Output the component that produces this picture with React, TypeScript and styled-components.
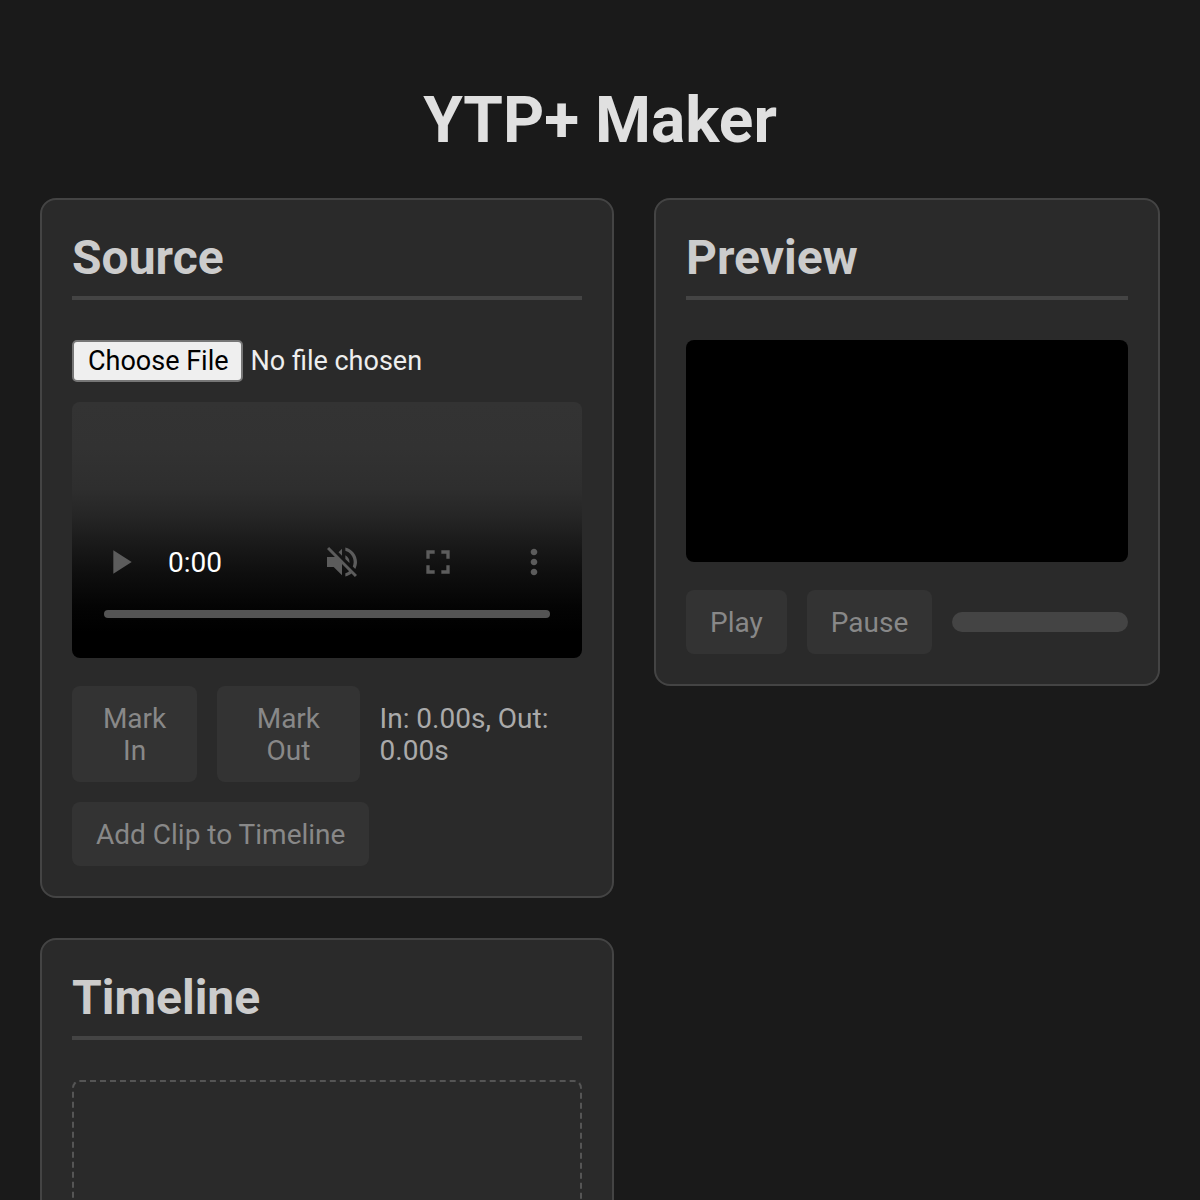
import React from "react";
import styled, { createGlobalStyle } from "styled-components";

const GlobalStyle = createGlobalStyle`
  *, *::before, *::after { box-sizing: border-box; }
  body {
    margin: 0;
    background: #1a1a1a;
    color: #eee;
    font-family: Roboto, "Liberation Sans", sans-serif;
  }
`;

const Page = styled.main`
  padding: 40px;
`;

const Title = styled.h1`
  margin: 43px 0 40px;
  font-size: 64px;
  line-height: 75px;
  font-weight: 700;
  text-align: center;
  color: #e0e0e0;
`;

const Editor = styled.div`
  display: grid;
  grid-template-columns: 287fr 253fr;
  gap: 40px;
  align-items: start;
`;

const Panel = styled.section<{ $column: number }>`
  grid-column: ${(p) => p.$column};
  min-width: 0;
  padding: 30px;
  background: #2a2a2a;
  border: 2px solid #444;
  border-radius: 16px;
`;

const PanelTitle = styled.h2`
  margin: 0 0 40px;
  padding-bottom: 10px;
  border-bottom: 4px solid #444;
  font-size: 48px;
  line-height: 56px;
  font-weight: 700;
  color: #ccc;
`;

const FileInput = styled.input`
  display: block;
  width: 100%;
  height: 42px;
  margin-bottom: 20px;
  font: 27px/32px Roboto, "Liberation Sans", sans-serif;
  color: #eee;

  &::file-selector-button {
    height: 42px;
    margin: 0 8px 0 0;
    padding: 0 12px 0 14px;
    border: 2px solid #767676;
    border-radius: 5px;
    background: #efefef;
    color: #000;
    font: inherit;
  }
`;

const Screen = styled.div`
  aspect-ratio: 255 / 128;
  margin-bottom: 28px;
  border-radius: 8px;
  background: #000;
  overflow: hidden;
`;

const Player = styled(Screen)`
  display: flex;
  flex-direction: column;
  justify-content: flex-end;
  padding-bottom: 40px;
  background: linear-gradient(
    #333 0%,
    #323232 18%,
    #2e2e2e 34%,
    #262626 44%,
    #1a1a1a 55%,
    #0f0f0f 66%,
    #040404 80%,
    #000 90%
  );
`;

const PlayerBar = styled.div`
  display: flex;
  align-items: center;
  height: 96px;
`;

const PlayerButton = styled.button`
  display: flex;
  align-items: center;
  justify-content: center;
  width: 96px;
  height: 96px;
  padding: 0;
  border: 0;
  background: none;
  color: #5c5c5c;

  svg {
    display: block;
    width: 40px;
    height: 40px;
    fill: currentColor;
  }
`;

const PlayerTime = styled.span`
  flex: 1;
  padding-top: 2px;
  font-size: 28px;
  line-height: 32px;
  color: #fff;
`;

const PlayerTrack = styled.input`
  appearance: none;
  height: 8px;
  margin: 0 32px;
  border-radius: 4px;
  background: #545454;

  &::-webkit-slider-thumb {
    appearance: none;
    width: 0;
    height: 0;
  }
`;

const Controls = styled.div`
  display: flex;
  align-items: center;
  gap: 20px;

  & + & {
    margin-top: 20px;
  }
`;

const Button = styled.button`
  padding: 17px 24px 15px;
  border: 0;
  border-radius: 8px;
  background: #333;
  color: #888;
  font: 28px/32px Roboto, "Liberation Sans", sans-serif;
`;

const MarkTimes = styled.span`
  padding-top: 2px;
  font-size: 28px;
  line-height: 32px;
  color: #aaa;
`;

const PreviewProgress = styled.progress`
  appearance: none;
  flex: 1;
  min-width: 0;
  height: 20px;
  border: 0;
  border-radius: 10px;
  background: #444;
  overflow: hidden;

  &::-webkit-progress-bar {
    background: #444;
  }
  &::-webkit-progress-value {
    background: #888;
  }
`;

const TimelineTrack = styled.div`
  min-height: 200px;
  border: 2px dashed #555;
  border-radius: 8px;
`;

const icons = {
  play: "M8 5v14l11-7z",
  muted:
    "M16.5 12c0-1.77-1.02-3.29-2.5-4.03v2.21l2.45 2.45c.03-.2.05-.41.05-.63zm2.5 0c0 .94-.2 1.82-.54 2.64l1.51 1.51C20.63 14.91 21 13.5 21 12c0-4.28-2.99-7.86-7-8.77v2.06c2.89.86 5 3.54 5 6.71zM4.27 3L3 4.27 7.73 9H3v6h4l5 5v-6.73l4.25 4.25c-.67.52-1.42.93-2.25 1.18v2.06c1.38-.31 2.63-.95 3.69-1.81L19.73 21 21 19.73l-9-9L4.27 3zM12 4L9.91 6.09 12 8.18V4z",
  fullscreen:
    "M7 14H5v5h5v-2H7v-3zm-2-4h2V7h3V5H5v5zm12 7h-3v2h5v-5h-2v3zM14 5v2h3v3h2V5h-5z",
  more: "M12 8c1.1 0 2-.9 2-2s-.9-2-2-2-2 .9-2 2 .9 2 2 2zm0 2c-1.1 0-2 .9-2 2s.9 2 2 2 2-.9 2-2-.9-2-2-2zm0 6c-1.1 0-2 .9-2 2s.9 2 2 2 2-.9 2-2-.9-2-2-2z",
};

function IconButton({ icon, label }: { icon: keyof typeof icons; label: string }) {
  return (
    <PlayerButton type="button" aria-label={label} disabled>
      <svg viewBox="0 0 24 24" aria-hidden="true">
        <path d={icons[icon]} />
      </svg>
    </PlayerButton>
  );
}

export default function App() {
  return (
    <>
      <GlobalStyle />
      <Page>
        <Title>YTP+ Maker</Title>
        <Editor>
          <Panel $column={1}>
            <PanelTitle>Source</PanelTitle>
            <FileInput type="file" accept="video/*" aria-label="Source video" />
            <Player>
              <PlayerBar>
                <IconButton icon="play" label="Play" />
                <PlayerTime>0:00</PlayerTime>
                <IconButton icon="muted" label="Unmute" />
                <IconButton icon="fullscreen" label="Full screen" />
                <IconButton icon="more" label="More options" />
              </PlayerBar>
              <PlayerTrack type="range" min={0} max={100} defaultValue={0} aria-label="Position" disabled />
            </Player>
            <Controls>
              <Button type="button" disabled>Mark In</Button>
              <Button type="button" disabled>Mark Out</Button>
              <MarkTimes>In: 0.00s, Out: 0.00s</MarkTimes>
            </Controls>
            <Controls>
              <Button type="button" disabled>Add Clip to Timeline</Button>
            </Controls>
          </Panel>
          <Panel $column={2}>
            <PanelTitle>Preview</PanelTitle>
            <Screen />
            <Controls>
              <Button type="button" disabled>Play</Button>
              <Button type="button" disabled>Pause</Button>
              <PreviewProgress value={0} max={100} aria-label="Preview progress" />
            </Controls>
          </Panel>
          <Panel $column={1}>
            <PanelTitle>Timeline</PanelTitle>
            <TimelineTrack />
          </Panel>
        </Editor>
      </Page>
    </>
  );
}
